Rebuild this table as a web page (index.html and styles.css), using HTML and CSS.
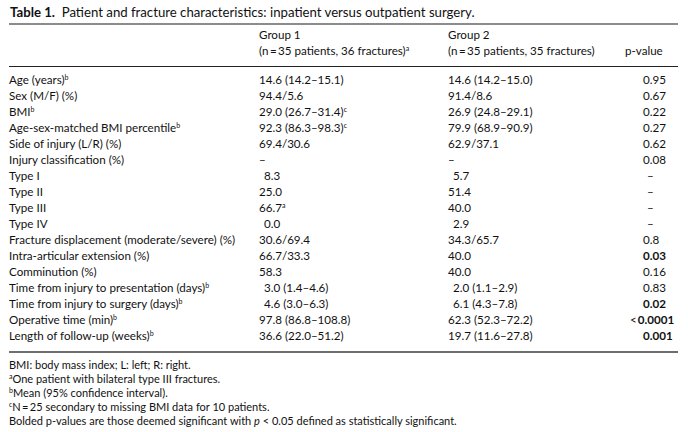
FILE: index.html
```html
<!DOCTYPE html>
<html>
<head>
<meta charset="utf-8">
<link rel="stylesheet" href="styles.css">
</head>
<body>
<div class="page">
  <p class="title"><b>Table 1.</b>&nbsp; Patient and fracture characteristics: inpatient versus outpatient surgery.</p>
  <table class="data">
    <colgroup>
      <col class="c-label"><col class="c-g1"><col class="c-g2"><col class="c-p">
    </colgroup>
    <thead>
      <tr class="h1"><th></th><th>Group 1</th><th>Group 2</th><th></th></tr>
      <tr class="h2"><th></th><th>(n&#8201;=&#8201;35 patients, 36 fractures)<sup>a</sup></th><th>(n&#8201;=&#8201;35 patients, 35 fractures)</th><th class="pv">p-value</th></tr>
    </thead>
    <tbody>
      <tr class="first"><td>Age (years)<sup>b</sup></td><td>14.6 (14.2–15.1)</td><td>14.6 (14.2–15.0)</td><td class="pv">0.95</td></tr>
      <tr><td>Sex (M/F) (%)</td><td>94.4/5.6</td><td>91.4/8.6</td><td class="pv">0.67</td></tr>
      <tr><td>BMI<sup>b</sup></td><td>29.0 (26.7–31.4)<sup>c</sup></td><td>26.9 (24.8–29.1)</td><td class="pv">0.22</td></tr>
      <tr><td>Age-sex-matched BMI percentile<sup>b</sup></td><td>92.3 (86.3–98.3)<sup>c</sup></td><td>79.9 (68.9–90.9)</td><td class="pv">0.27</td></tr>
      <tr><td>Side of injury (L/R) (%)</td><td>69.4/30.6</td><td>62.9/37.1</td><td class="pv">0.62</td></tr>
      <tr><td>Injury classification (%)</td><td>–</td><td>–</td><td class="pv">0.08</td></tr>
      <tr><td>Type I</td><td><span class="ind">8.3</span></td><td><span class="ind">5.7</span></td><td class="pv"><span class="dash">–</span></td></tr>
      <tr><td>Type II</td><td>25.0</td><td>51.4</td><td class="pv"><span class="dash">–</span></td></tr>
      <tr><td>Type III</td><td>66.7<sup>a</sup></td><td>40.0</td><td class="pv"><span class="dash">–</span></td></tr>
      <tr><td>Type IV</td><td><span class="ind">0.0</span></td><td><span class="ind">2.9</span></td><td class="pv"><span class="dash">–</span></td></tr>
      <tr><td>Fracture displacement (moderate/severe) (%)</td><td>30.6/69.4</td><td>34.3/65.7</td><td class="pv">0.8</td></tr>
      <tr><td>Intra-articular extension (%)</td><td>66.7/33.3</td><td>40.0</td><td class="pv"><b>0.03</b></td></tr>
      <tr><td>Comminution (%)</td><td>58.3</td><td>40.0</td><td class="pv">0.16</td></tr>
      <tr><td>Time from injury to presentation (days)<sup>b</sup></td><td><span class="ind">3.0 (1.4–4.6)</span></td><td><span class="ind">2.0 (1.1–2.9)</span></td><td class="pv">0.83</td></tr>
      <tr><td>Time from injury to surgery (days)<sup>b</sup></td><td><span class="ind">4.6 (3.0–6.3)</span></td><td><span class="ind">6.1 (4.3–7.8)</span></td><td class="pv"><b>0.02</b></td></tr>
      <tr><td>Operative time (min)<sup>b</sup></td><td>97.8 (86.8–108.8)</td><td>62.3 (52.3–72.2)</td><td class="pv"><span class="lt">&lt;</span><b>0.0001</b></td></tr>
      <tr class="last"><td>Length of follow-up (weeks)<sup>b</sup></td><td>36.6 (22.0–51.2)</td><td>19.7 (11.6–27.8)</td><td class="pv"><b>0.001</b></td></tr>
    </tbody>
  </table>
  <div class="notes">
    <p>BMI: body mass index; L: left; R: right.</p>
    <p><sup>a</sup>One patient with bilateral type III fractures.</p>
    <p><sup>b</sup>Mean (95% confidence interval).</p>
    <p><sup>c</sup>N&#8201;=&#8201;25 secondary to missing BMI data for 10 patients.</p>
    <p>Bolded p-values are those deemed significant with <i>p</i> &lt; 0.05 defined as statistically significant.</p>
  </div>
</div>
</body>
</html>
```
FILE: styles.css
```css
body {
  margin: 0;
  background: #ffffff;
  color: #111111;
  font-family: Lato, "Open Sans", sans-serif;
}
.page {
  padding: 4px 10px 0 9px;
}
.title {
  margin: 0 0 3px 1px;
  font-size: 13.2px;
  line-height: 16px;
}
.title b {
  font-weight: 700;
}
.data {
  width: 669px;
  border-collapse: collapse;
  font-size: 11.6px;
  line-height: 16px;
}
.c-label { width: 250px; }
.c-g1 { width: 189px; }
.c-g2 { width: 195px; }
.c-p { width: 35px; }
.data th,
.data td {
  padding: 0;
  text-align: left;
  font-weight: 400;
  white-space: nowrap;
  vertical-align: bottom;
}
.data .h1 th {
  border-top: 2px solid #8c8c8c;
  padding-top: 2px;
}
.data .h2 th {
  border-bottom: 1px solid #222222;
  padding-bottom: 7px;
}
.data .first td {
  padding-top: 5px;
}
.data .last td {
  border-bottom: 2px solid #6e6e6e;
  padding-bottom: 7px;
}
.h2 th.pv {
  text-indent: -18px;
}
.data td.pv b {
  font-weight: 700;
}
.ind {
  padding-left: 5px;
}
.dash {
  padding-left: 4px;
}
.lt {
  margin-left: -13px;
  padding-right: 1px;
}
sup {
  font-size: 7px;
  line-height: 0;
  vertical-align: 4px;
}
.notes {
  margin-top: 5px;
  font-size: 11px;
  line-height: 14px;
}
.notes p {
  margin: 0;
}
.notes sup {
  font-size: 7px;
}
```
